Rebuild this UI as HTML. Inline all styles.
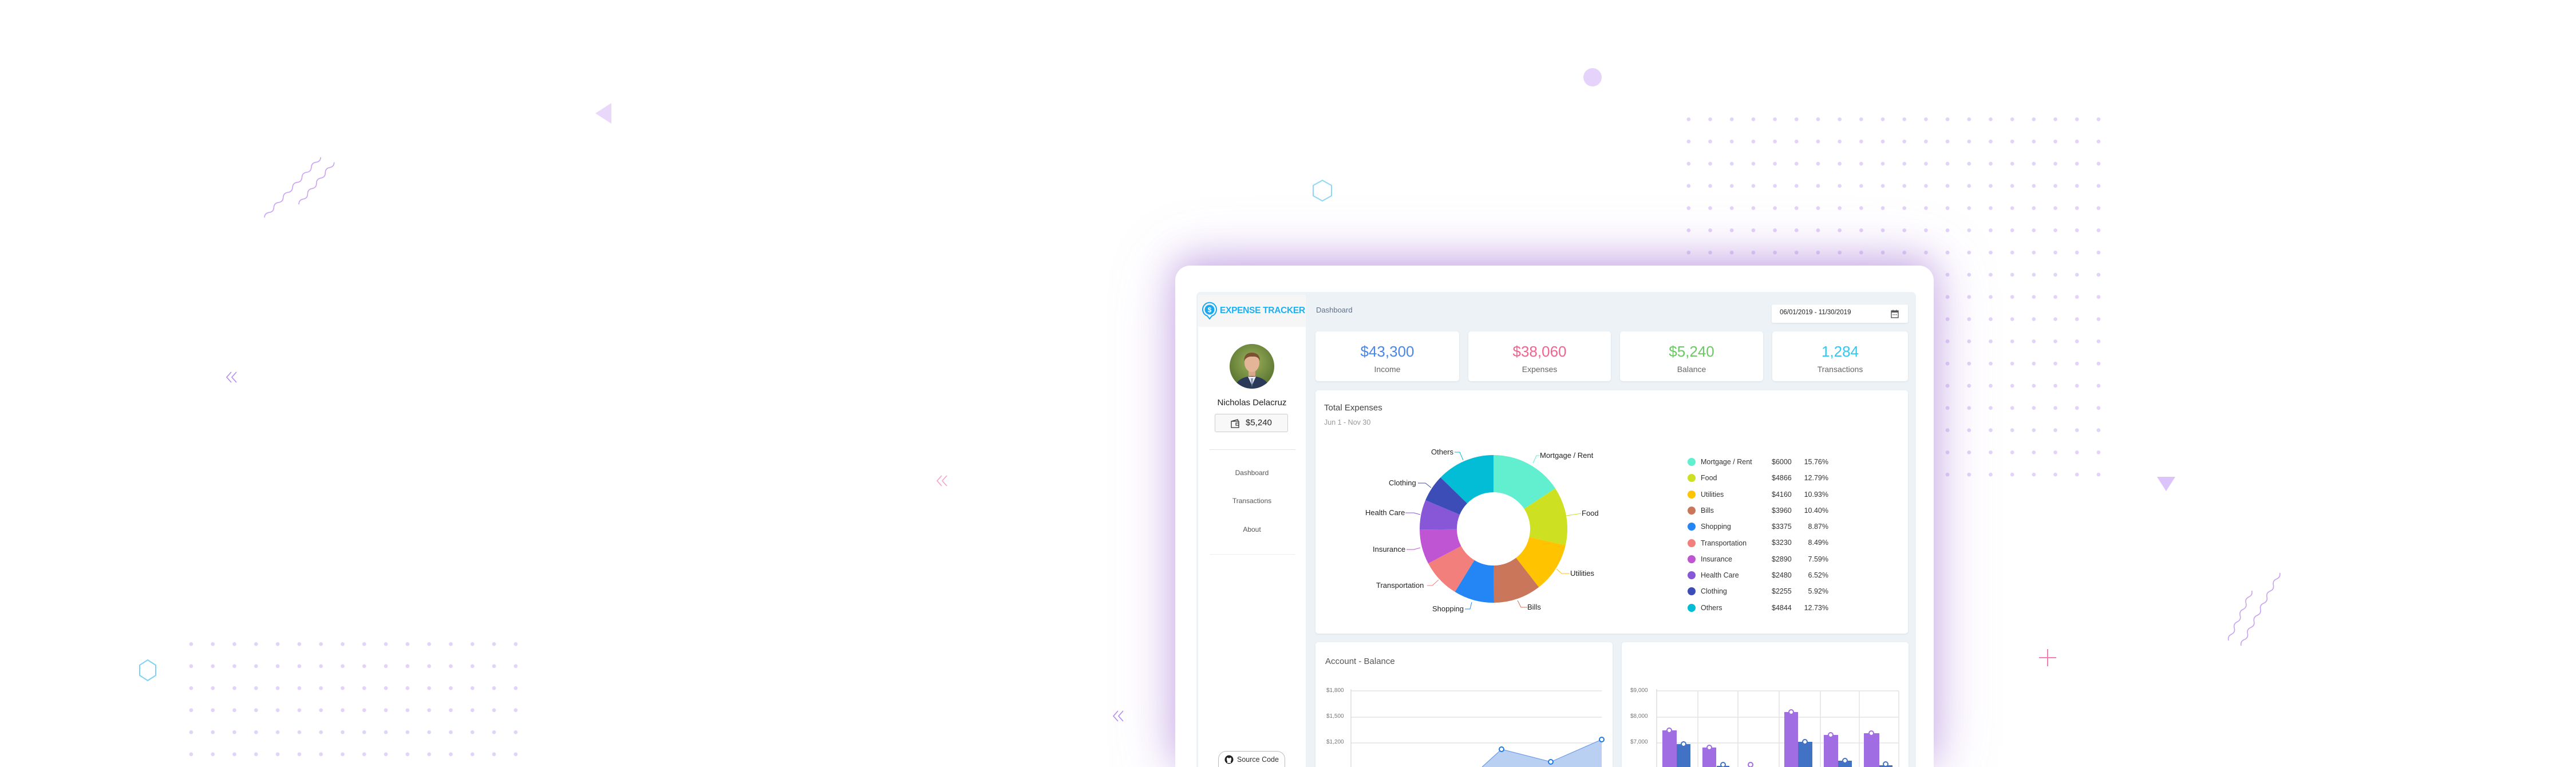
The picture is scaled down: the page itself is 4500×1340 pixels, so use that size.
<!DOCTYPE html>
<html><head><meta charset="utf-8">
<style>
*{margin:0;padding:0;box-sizing:border-box}
html,body{width:4500px;height:1340px;overflow:hidden}
body{background:#fff;font-family:"Liberation Sans",sans-serif}
#w{position:relative;width:4500px;height:1340px;overflow:hidden}
.a{position:absolute}
.dots{position:absolute;background-image:radial-gradient(circle,#e2d3f8 3px,transparent 3.6px)}
.card{position:absolute;background:#fff;border-radius:5px;box-shadow:0 1px 3px rgba(0,0,0,.08)}
.num{position:absolute;left:0;right:0;text-align:center;font-size:26px;top:20px}
.lbl{position:absolute;left:0;right:0;text-align:center;font-size:14px;color:#666;top:58px}
.nav{position:absolute;left:2093px;width:188px;text-align:center;font-size:12px;color:#555}
.lg{position:absolute;font-size:12.5px;color:#333;height:20px;line-height:20px;left:0}
.lg i{position:absolute;left:-23px;top:3px;width:14px;height:14px;border-radius:50%}
.dl{position:absolute;font-size:13px;color:#222}
.ax{position:absolute;font-size:10px;color:#777}
</style></head><body><div id="w">

<div class="dots" style="left:2931px;top:189px;width:754px;height:660px;background-size:37.7px 38.8px"></div>
<div class="dots" style="left:315px;top:1106px;width:605px;height:234px;background-size:37.8px 38.5px"></div>

<svg class="a" style="left:0;top:0" width="4500" height="1340">
 <polygon points="1068,180 1068,216 1040,198" fill="#ead8fb"/>
 <circle cx="2782" cy="135" r="16" fill="#e6d3fb"/>
 <polygon points="3768,833 3800,833 3784,858" fill="#dcc3fa"/>
 <g stroke="#f27fb8" stroke-width="2"><line x1="3562" y1="1149" x2="3592" y2="1149"/><line x1="3577" y1="1134" x2="3577" y2="1164"/></g>
 <polygon points="2310,315 2326,324 2326,342 2310,351 2294,342 2294,324" fill="none" stroke="#8fd8f6" stroke-width="2"/>
 <polygon points="258,1153 272,1162 272,1180 258,1189 244,1180 244,1162" fill="none" stroke="#7fd2f5" stroke-width="2"/>
 <g fill="none" stroke="#c9a3f2" stroke-width="1.6">
  <path transform="translate(462,380) rotate(-47)" d="M0 0 q6 -5 12 0 t12 0 t12 0 t12 0 t12 0 t12 0 t12 0 t12 0 t12 0 t12 0 t12 0 t12 0"/>
  <path transform="translate(522,357) rotate(-50)" d="M0 0 q6 -5 12 0 t12 0 t12 0 t12 0 t12 0 t12 0 t12 0 t12 0"/>
  <path transform="translate(3893,1119) rotate(-65)" d="M0 0 q6 -5 12 0 t12 0 t12 0 t12 0 t12 0 t12 0 t12 0 t12 0"/>
  <path transform="translate(3915,1128) rotate(-62)" d="M0 0 q6 -5 12 0 t12 0 t12 0 t12 0 t12 0 t12 0 t12 0 t12 0 t12 0 t12 0 t12 0 t12 0"/>
 </g>
 <g fill="none" stroke="#b48cf0" stroke-width="1.6">
  <polyline points="404,650 396,659 404,668"/><polyline points="413,650 405,659 413,668"/>
  <polyline points="1953,1242 1945,1251 1953,1260"/><polyline points="1962,1242 1954,1251 1962,1260"/>
 </g>
 <g fill="none" stroke="#f5a3c6" stroke-width="1.6">
  <polyline points="1645,831 1637,840 1645,849"/><polyline points="1654,831 1646,840 1654,849"/>
 </g>
</svg>

<div class="a" style="left:2053px;top:464px;width:1325px;height:876px;background:#fff;border-radius:26px 26px 0 0;box-shadow:0 -10px 60px rgba(160,110,210,.45),0 0 110px rgba(170,120,220,.35)"></div>

<div class="a" style="left:2090px;top:510px;width:1257px;height:830px;background:#edf2f7;border-radius:8px 8px 0 0"></div>
<div class="a" style="left:2093px;top:515px;width:188px;height:825px;background:#fff"></div>
<div class="a" style="left:2093px;top:515px;width:188px;height:56px;background:#f6f6f6"></div>
<svg class="a" style="left:2099px;top:527px" width="30" height="34">
 <path d="M14 30 L10 25 A12 12 0 1 1 18 25 Z" fill="none" stroke="#1aa9f0" stroke-width="2"/>
 <circle cx="14" cy="14" r="8.5" fill="#1aa9f0"/>
 <text x="14" y="18.5" font-size="12" font-weight="bold" fill="#fff" text-anchor="middle" font-family="Liberation Sans">$</text>
</svg>
<div class="a" style="left:2131px;top:534px;font-size:15.5px;font-weight:bold;color:#1cb0f2;letter-spacing:-.3px">EXPENSE TRACKER</div>
<div class="a" style="left:2299px;top:534px;font-size:13px;color:#5d6f8a">Dashboard</div>

<svg class="a" style="left:2148px;top:601px" width="78" height="78">
 <defs><clipPath id="cp"><circle cx="39" cy="39" r="39"/></clipPath>
 <radialGradient id="bg" cx=".5" cy=".4" r=".7"><stop offset="0" stop-color="#9cb25a"/><stop offset="1" stop-color="#4e6a2a"/></radialGradient></defs>
 <g clip-path="url(#cp)">
  <rect width="78" height="78" fill="url(#bg)"/>
  <path d="M8 78 Q12 58 39 56 Q66 58 70 78 Z" fill="#2c3a5a"/>
  <path d="M32 57 L39 72 L46 57 Z" fill="#e9eef5"/>
  <path d="M37 60 L39 76 L41 60 Z" fill="#7f8fb0"/>
  <rect x="33" y="44" width="12" height="12" fill="#d9a88c"/>
  <ellipse cx="39" cy="33" rx="13" ry="16" fill="#e4b597"/>
  <path d="M25 30 Q26 14 40 15 Q53 16 53 30 Q50 21 40 22 Q30 21 25 30Z" fill="#7a5232"/>
 </g>
</svg>
<div class="a" style="left:2093px;top:695px;width:188px;text-align:center;font-size:15px;color:#222">Nicholas Delacruz</div>
<div class="a" style="left:2122px;top:723px;width:128px;height:32px;border:1px solid #ccc;border-radius:3px;background:#f8f8f8"></div>
<svg class="a" style="left:2149px;top:731px" width="18" height="18"><path d="M2 5 L13 2 L14 5 M2 5 H15 V16 H2 Z" fill="none" stroke="#333" stroke-width="1.3"/><rect x="10" y="8" width="5" height="4" fill="none" stroke="#333" stroke-width="1.2"/></svg>
<div class="a" style="left:2176px;top:730px;font-size:15px;color:#222">$5,240</div>
<div class="a" style="left:2113px;top:785px;width:150px;height:1px;background:#e3e3e3"></div>
<div class="nav" style="top:819px">Dashboard</div>
<div class="nav" style="top:868px">Transactions</div>
<div class="nav" style="top:918px">About</div>
<div class="a" style="left:2113px;top:968px;width:150px;height:1px;background:#eee"></div>
<div class="a" style="left:2128px;top:1312px;width:117px;height:28px;border:1px solid #bbb;border-bottom:none;border-radius:14px 14px 0 0"></div>
<svg class="a" style="left:2139px;top:1319px" width="16" height="16"><circle cx="8" cy="8" r="7.5" fill="#222"/><path d="M5 14 V11 Q4 10 4 7 Q4 4.5 6 4.5 L7 5.5 H9 L10 4.5 Q12 4.5 12 7 Q12 10 11 11 V14 Z" fill="#fff"/></svg>
<div class="a" style="left:2161px;top:1320px;font-size:12.5px;color:#333">Source Code</div>

<div class="card" style="left:3095px;top:532px;width:238px;height:32px;border-radius:3px"></div>
<div class="a" style="left:3109px;top:540px;font-size:11.5px;color:#222">06/01/2019 - 11/30/2019</div>
<svg class="a" style="left:3303px;top:540px" width="14" height="16"><rect x="1" y="3" width="12" height="12" fill="none" stroke="#555" stroke-width="1.4"/><rect x="1" y="3" width="12" height="3" fill="#555"/><line x1="4" y1="1" x2="4" y2="4" stroke="#555"/><line x1="10" y1="1" x2="10" y2="4" stroke="#555"/><g fill="#555"><rect x="3.5" y="9" width="1.5" height="1.5"/><rect x="6.3" y="9" width="1.5" height="1.5"/><rect x="9" y="9" width="1.5" height="1.5"/></g></svg>

<div class="card" style="left:2298px;top:579px;width:251px;height:87px"><div class="num" style="color:#4b86ea">$43,300</div><div class="lbl">Income</div></div>
<div class="card" style="left:2565px;top:579px;width:249px;height:87px"><div class="num" style="color:#f2648f">$38,060</div><div class="lbl">Expenses</div></div>
<div class="card" style="left:2830px;top:579px;width:250px;height:87px"><div class="num" style="color:#6cc864">$5,240</div><div class="lbl">Balance</div></div>
<div class="card" style="left:3096px;top:579px;width:237px;height:87px"><div class="num" style="color:#30c9ef">1,284</div><div class="lbl">Transactions</div></div>

<div class="card" style="left:2298px;top:682px;width:1035px;height:425px"></div>
<div class="a" style="left:2313px;top:704px;font-size:15px;color:#444">Total Expenses</div>
<div class="a" style="left:2313px;top:731px;font-size:12.5px;color:#999">Jun 1 - Nov 30</div>
<svg class="a" style="left:0;top:0" width="4500" height="1340">
 <g transform="translate(2609,924)">
  <path d="M0 -129 A129 129 0 0 1 107.9 -70.8 L53.5 -35.1 A64 64 0 0 0 0 -64Z" fill="#62efd0"/>
  <path d="M107.9 -70.8 A129 129 0 0 1 125.8 28.5 L62.4 14.2 A64 64 0 0 0 53.5 -35.1Z" fill="#cde021"/>
  <path d="M125.8 28.5 A129 129 0 0 1 79.2 101.8 L39.3 50.5 A64 64 0 0 0 62.4 14.2Z" fill="#ffc300"/>
  <path d="M79.2 101.8 A129 129 0 0 1 1 129 L0.5 64 A64 64 0 0 0 39.3 50.5Z" fill="#c9765a"/>
  <path d="M1 129 A129 129 0 0 1 -67.4 110 L-33.4 54.6 A64 64 0 0 0 0.5 64Z" fill="#2486f5"/>
  <path d="M-67.4 110 A129 129 0 0 1 -114 60.4 L-56.5 30 A64 64 0 0 0 -33.4 54.6Z" fill="#f37f7d"/>
  <path d="M-114 60.4 A129 129 0 0 1 -129 1.4 L-64 0.7 A64 64 0 0 0 -56.5 30Z" fill="#c055d4"/>
  <path d="M-129 1.4 A129 129 0 0 1 -118.9 -50.1 L-59 -24.9 A64 64 0 0 0 -64 0.7Z" fill="#8757d8"/>
  <path d="M-118.9 -50.1 A129 129 0 0 1 -92.5 -89.9 L-45.9 -44.6 A64 64 0 0 0 -59 -24.9Z" fill="#3d4db7"/>
  <path d="M-92.5 -89.9 A129 129 0 0 1 0 -129 L0 -64 A64 64 0 0 0 -45.9 -44.6Z" fill="#03bcd6"/>
 </g>
 <g fill="none" stroke-width="1">
  <polyline points="2541,790 2550,790 2556,804" stroke="#03bcd6"/>
  <polyline points="2678,809 2684,796 2690,796" stroke="#62efd0"/>
  <polyline points="2736,901 2762,897" stroke="#cde021"/>
  <polyline points="2719,994 2728,1002 2742,1002" stroke="#ffc300"/>
  <polyline points="2651,1049 2657,1061 2668,1061" stroke="#c9765a"/>
  <polyline points="2571,1052 2568,1064 2559,1064" stroke="#2486f5"/>
  <polyline points="2513,1013 2502,1023 2493,1023" stroke="#f37f7d"/>
  <polyline points="2481,957 2470,960 2457,960" stroke="#c055d4"/>
  <polyline points="2481,899 2470,896 2455,896" stroke="#8757d8"/>
  <polyline points="2500,852 2490,844 2477,844" stroke="#3d4db7"/>
 </g>
</svg>
<div class="dl" style="left:2500px;top:782px">Others</div>
<div class="dl" style="left:2690px;top:788px">Mortgage / Rent</div>
<div class="dl" style="left:2763px;top:889px">Food</div>
<div class="dl" style="left:2743px;top:994px">Utilities</div>
<div class="dl" style="left:2668px;top:1053px">Bills</div>
<div class="dl" style="left:2502px;top:1056px">Shopping</div>
<div class="dl" style="left:2404px;top:1015px">Transportation</div>
<div class="dl" style="left:2398px;top:952px">Insurance</div>
<div class="dl" style="left:2385px;top:888px">Health Care</div>
<div class="dl" style="left:2426px;top:836px">Clothing</div>

<div class="a" style="left:2971px;top:797px;width:120px;height:290px">
 <div class="lg" style="top:0"><i style="background:#62efd0"></i>Mortgage / Rent</div>
 <div class="lg" style="top:28.3px"><i style="background:#cde021"></i>Food</div>
 <div class="lg" style="top:56.6px"><i style="background:#ffc300"></i>Utilities</div>
 <div class="lg" style="top:84.9px"><i style="background:#c9765a"></i>Bills</div>
 <div class="lg" style="top:113.2px"><i style="background:#2486f5"></i>Shopping</div>
 <div class="lg" style="top:141.5px"><i style="background:#f37f7d"></i>Transportation</div>
 <div class="lg" style="top:169.8px"><i style="background:#c055d4"></i>Insurance</div>
 <div class="lg" style="top:198.1px"><i style="background:#8757d8"></i>Health Care</div>
 <div class="lg" style="top:226.4px"><i style="background:#3d4db7"></i>Clothing</div>
 <div class="lg" style="top:254.7px"><i style="background:#03bcd6"></i>Others</div>
</div>
<div class="a" style="left:3095px;top:793px;font-size:12.5px;color:#333;line-height:28.3px">$6000<br>$4866<br>$4160<br>$3960<br>$3375<br>$3230<br>$2890<br>$2480<br>$2255<br>$4844</div>
<div class="a" style="left:3140px;width:54px;text-align:right;top:793px;font-size:12.5px;color:#333;line-height:28.3px">15.76%<br>12.79%<br>10.93%<br>10.40%<br>8.87%<br>8.49%<br>7.59%<br>6.52%<br>5.92%<br>12.73%</div>

<div class="card" style="left:2298px;top:1122px;width:519px;height:218px;border-radius:5px 5px 0 0"></div>
<div class="card" style="left:2833px;top:1122px;width:501px;height:218px;border-radius:5px 5px 0 0"></div>
<div class="a" style="left:2315px;top:1147px;font-size:15px;color:#555">Account - Balance</div>
<div class="ax" style="left:2317px;top:1201px">$1,800</div>
<div class="ax" style="left:2317px;top:1246px">$1,500</div>
<div class="ax" style="left:2317px;top:1291px">$1,200</div>
<div class="ax" style="left:2848px;top:1201px">$9,000</div>
<div class="ax" style="left:2848px;top:1246px">$8,000</div>
<div class="ax" style="left:2848px;top:1291px">$7,000</div>
<svg class="a" style="left:0;top:0" width="4500" height="1340">
 <g stroke="#e3e3e3" stroke-width="1.5">
  <line x1="2360" y1="1207" x2="2798" y2="1207"/><line x1="2360" y1="1253" x2="2798" y2="1253"/><line x1="2360" y1="1298" x2="2798" y2="1298"/>
  <line x1="2894" y1="1207" x2="3317" y2="1207"/><line x1="2894" y1="1253" x2="3317" y2="1253"/><line x1="2894" y1="1298" x2="3317" y2="1298"/>
  <line x1="2966" y1="1207" x2="2966" y2="1340"/><line x1="3036" y1="1207" x2="3036" y2="1340"/><line x1="3108" y1="1207" x2="3108" y2="1340"/><line x1="3180" y1="1207" x2="3180" y2="1340"/><line x1="3248" y1="1207" x2="3248" y2="1340"/><line x1="3317" y1="1207" x2="3317" y2="1340"/>
 </g>
 <line x1="2360" y1="1204" x2="2360" y2="1340" stroke="#ccc"/>
 <line x1="2894" y1="1204" x2="2894" y2="1340" stroke="#ccc"/>
 <path d="M2589 1340 L2623 1309 L2709 1331 L2798 1292 L2798 1340Z" fill="#b9d0f2"/>
 <polyline points="2589,1340 2623,1309 2709,1331 2798,1292" fill="none" stroke="#6e9de6" stroke-width="1.2"/>
 <g fill="#fff" stroke="#1f7ae0" stroke-width="2"><circle cx="2623" cy="1309" r="4"/><circle cx="2709" cy="1331" r="4"/><circle cx="2798" cy="1292" r="4"/></g>
 <g fill="#a06de2">
  <rect x="2904" y="1276" width="25" height="64"/><rect x="2974" y="1306" width="24" height="34"/>
  <rect x="3117" y="1244" width="24" height="96"/><rect x="3186" y="1284" width="25" height="56"/><rect x="3256" y="1281" width="27" height="59"/>
 </g>
 <g fill="#4272c4">
  <rect x="2929" y="1300" width="24" height="40"/><rect x="2999" y="1338" width="22" height="2"/>
  <rect x="3141" y="1296" width="25" height="44"/><rect x="3211" y="1329" width="24" height="11"/><rect x="3283" y="1337" width="23" height="3"/>
 </g>
 <g fill="#fff" stroke="#a06de2" stroke-width="2"><circle cx="2916" cy="1276" r="4"/><circle cx="2986" cy="1306" r="4"/><circle cx="3058" cy="1336" r="4"/><circle cx="3129" cy="1244" r="4"/><circle cx="3198" cy="1284" r="4"/><circle cx="3269" cy="1281" r="4"/></g>
 <g fill="#fff" stroke="#4272c4" stroke-width="2"><circle cx="2941" cy="1300" r="4"/><circle cx="3010" cy="1336" r="4"/><circle cx="3153" cy="1296" r="4"/><circle cx="3223" cy="1329" r="4"/><circle cx="3294" cy="1335" r="4"/></g>
</svg>
</div></body></html>
